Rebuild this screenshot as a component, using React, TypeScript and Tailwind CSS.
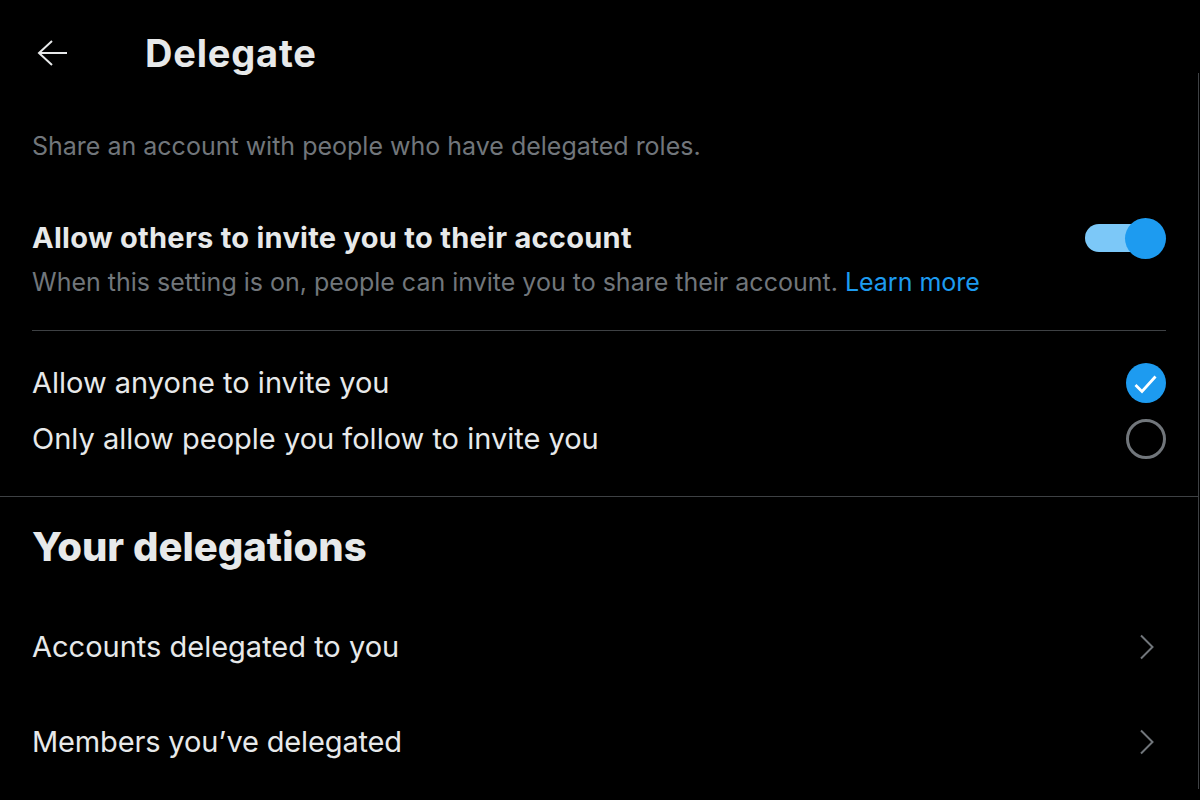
import React from "react";

const FONT = { fontFamily: '"Inter", "Noto Sans", sans-serif' };

function Chevron() {
  return (
    <svg width="28" height="28" viewBox="0 0 28 28" fill="none">
      <path d="M9 2.5 L20.5 14 L9 25.5" stroke="#71767b" strokeWidth="2" />
    </svg>
  );
}

export default function App() {
  return (
    <div className="w-[1200px] h-[800px] bg-black text-[#e7e9ea] overflow-hidden" style={FONT}>
      <div className="w-[1199px] flex flex-col">
        <header className="h-[73px] flex items-start pt-[33px]">
          <div className="w-[145px] h-[40px] flex items-center pl-[36px]">
            <svg width="32" height="32" viewBox="0 0 32 32" fill="none">
              <path d="M31 16H3M16 4 L3 16 L16 28" stroke="#e7e9ea" strokeWidth="2" />
            </svg>
          </div>
          <h1 className="text-[38px] leading-[40px] font-bold tracking-[0.8px]">Delegate</h1>
        </header>
        <div className="border-r border-[#3e4144] flex flex-col">
          <div className="px-8 flex flex-col">
            <p className="mt-[56px] text-[25px] leading-[34px] text-[#71767b]">
              Share an account with people who have delegated roles.
            </p>
            <div className="mt-[55px] flex items-center justify-between">
              <span className="text-[29px] leading-[40px] font-bold tracking-[0.28px]">Allow others to invite you to their account</span>
              <div className="relative w-[81px] h-[40px] flex items-center">
                <div className="absolute left-0 w-[75px] h-[28px] rounded-full bg-[#7cc8f8]" />
                <div className="absolute right-0 w-[41px] h-[41px] rounded-full bg-[#1d9bf0]" />
              </div>
            </div>
            <p className="mt-[6px] text-[25px] leading-[36px] text-[#71767b]">
              When this setting is on, people can invite you to share their account.{" "}
              <span className="text-[#1d9bf0]">Learn more</span>
            </p>
            <div className="mt-[30px] h-px bg-[#3e4144]" />
            <div className="mt-[24px] h-[56px] flex items-center justify-between">
              <span className="text-[29px] leading-[40px]">Allow anyone to invite you</span>
              <div className="w-[40px] h-[40px] rounded-full bg-[#1d9bf0]">
                <svg width="40" height="40" viewBox="0 0 40 40" fill="none">
                  <path d="M9.5 22 L16 28.5 L29.5 13.5" stroke="white" strokeWidth="2.8" />
                </svg>
              </div>
            </div>
            <div className="h-[56px] flex items-center justify-between">
              <span className="text-[29px] leading-[40px]">Only allow people you follow to invite you</span>
              <div className="w-[40px] h-[40px] rounded-full border-[3px] border-[#71767b]" />
            </div>
          </div>
          <div className="mt-[29px] h-px bg-[#3e4144]" />
          <div className="px-8 flex flex-col">
            <h2 className="mt-[26px] text-[40px] leading-[48px] font-extrabold">Your delegations</h2>
            <div className="mt-[28px] h-[95px] flex items-center justify-between">
              <span className="text-[29px] leading-[40px]">Accounts delegated to you</span>
              <div className="pr-[6px]"><Chevron /></div>
            </div>
            <div className="h-[95px] flex items-center justify-between">
              <span className="text-[29px] leading-[40px] tracking-[-0.15px]">Members you’ve delegated</span>
              <div className="pr-[6px]"><Chevron /></div>
            </div>
          </div>
        </div>
      </div>
    </div>
  );
}
